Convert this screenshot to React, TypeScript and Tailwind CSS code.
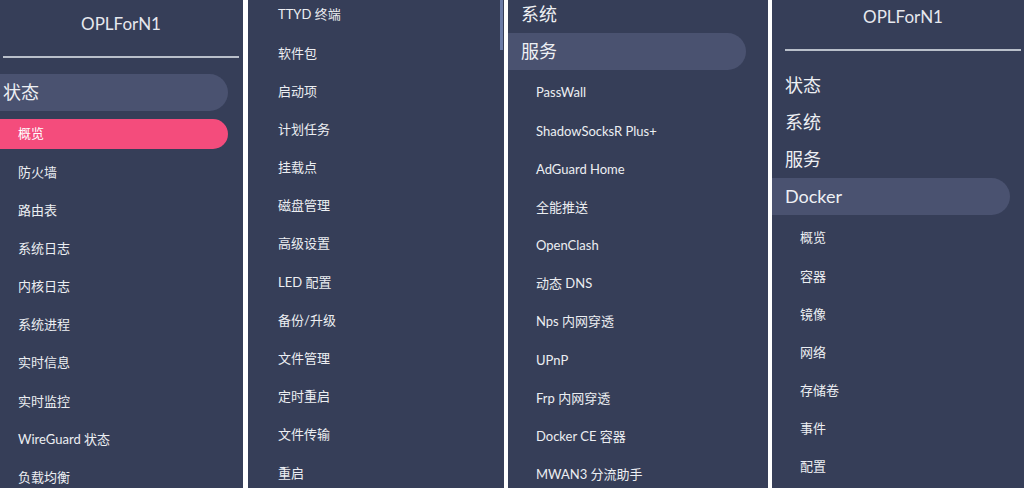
import React from "react";

const FONT = { fontFamily: 'Lato, "Noto Sans CJK SC", "Noto Sans", sans-serif' };

function Title() {
  return (
    <>
      <div className="h-[48px] flex items-center justify-center text-[17px] text-[#e6e8ee]">OPLForN1</div>
      <div className="mt-[8px] mx-[13px] h-[2px] bg-[#b9bfca]" />
      <div className="h-[16px]" />
    </>
  );
}

function Header({ label, open }: { label: string; open?: boolean }) {
  return (
    <div
      className={
        "h-[37px] w-[238px] flex items-center pl-[13px] text-[18px] text-[#eef0f4] rounded-r-full " +
        (open ? "bg-[#4a5270]" : "")
      }
    >
      {label}
    </div>
  );
}

function Item({ label, active }: { label: string; active?: boolean }) {
  if (active) {
    return (
      <div className="h-[38.2px] flex items-center">
        <div className="h-[30px] w-[238px] flex items-center pl-[28px] text-[13px] text-white bg-[#f44c7c] rounded-r-full">
          {label}
        </div>
      </div>
    );
  }
  return <div className="h-[38.2px] flex items-center pl-[28px] text-[13px] text-[#eceef2]">{label}</div>;
}

function Sub({ items, active }: { items: string[]; active?: string }) {
  return (
    <div className="pt-[4px]">
      {items.map((t) => (
        <Item key={t} label={t} active={t === active} />
      ))}
    </div>
  );
}

export default function App() {
  return (
    <div className="flex h-[488px] w-[1024px] bg-white overflow-hidden" style={FONT}>
      {/* Panel 1 */}
      <div className="w-[243px] h-full bg-[#363e58] overflow-hidden shrink-0">
        <div className="w-[262px] -ml-[10px]">
          <Title />
          <Header label="状态" open />
          <Sub
            active="概览"
            items={["概览", "防火墙", "路由表", "系统日志", "内核日志", "系统进程", "实时信息", "实时监控", "WireGuard 状态", "负载均衡"]}
          />
        </div>
      </div>
      <div className="w-[5px] shrink-0" />
      {/* Panel 2 */}
      <div className="relative w-[256px] h-full bg-[#363e58] overflow-hidden shrink-0">
        <div className="w-[262px] ml-[2px] -mt-[8px]">
          <Sub
            items={["TTYD 终端", "软件包", "启动项", "计划任务", "挂载点", "磁盘管理", "高级设置", "LED 配置", "备份/升级", "文件管理", "定时重启", "文件传输", "重启"]}
          />
        </div>
        <div className="absolute right-[1px] top-0 w-[3px] h-[50px] bg-[#6b7ba6]" />
      </div>
      <div className="w-[4px] shrink-0" />
      {/* Panel 3 */}
      <div className="w-[260px] h-full bg-[#363e58] overflow-hidden shrink-0">
        <div className="w-[262px] -mt-[4px]">
          <Header label="系统" />
          <Header label="服务" open />
          <Sub
            items={["PassWall", "ShadowSocksR Plus+", "AdGuard Home", "全能推送", "OpenClash", "动态 DNS", "Nps 内网穿透", "UPnP", "Frp 内网穿透", "Docker CE 容器", "MWAN3 分流助手"]}
          />
        </div>
      </div>
      <div className="w-[4px] shrink-0" />
      {/* Panel 4 */}
      <div className="w-[252px] h-full bg-[#363e58] overflow-hidden shrink-0">
        <div className="w-[262px] -mt-[7px]">
          <Title />
          <Header label="状态" />
          <Header label="系统" />
          <Header label="服务" />
          <Header label="Docker" open />
          <Sub items={["概览", "容器", "镜像", "网络", "存储卷", "事件", "配置"]} />
        </div>
      </div>
    </div>
  );
}
